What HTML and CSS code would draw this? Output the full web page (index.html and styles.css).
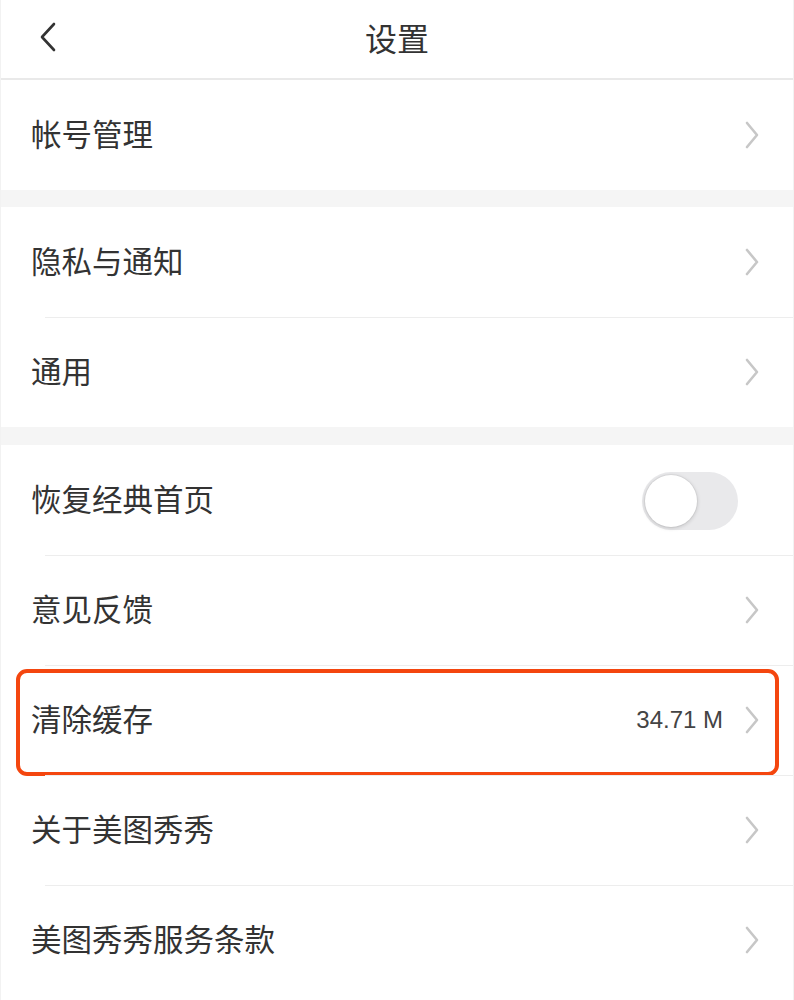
FILE: index.html
```html
<!DOCTYPE html>
<html lang="zh-CN">
<head>
<meta charset="utf-8">
<title>设置</title>
<link rel="stylesheet" href="styles.css">
</head>
<body>
<div class="page">
  <header class="topbar">
    <span class="back">
      <svg width="18" height="30" viewBox="0 0 18 30"><path d="M15 2 L3 15 L15 28" fill="none" stroke="#333" stroke-width="2.6" stroke-linecap="round" stroke-linejoin="round"/></svg>
    </span>
    <h1 class="title">设置</h1>
  </header>

  <section class="group first">
    <div class="row"><span class="label">帐号管理</span><span class="chev"><svg width="16" height="28" viewBox="0 0 16 28"><path d="M3 2 L13 14 L3 26" fill="none" stroke="#c7c7c7" stroke-width="2.6" stroke-linecap="round" stroke-linejoin="round"/></svg></span></div>
  </section>

  <div class="band"></div>

  <section class="group">
    <div class="row"><span class="label">隐私与通知</span><span class="chev"><svg width="16" height="28" viewBox="0 0 16 28"><path d="M3 2 L13 14 L3 26" fill="none" stroke="#c7c7c7" stroke-width="2.6" stroke-linecap="round" stroke-linejoin="round"/></svg></span></div>
    <div class="row"><span class="label">通用</span><span class="chev"><svg width="16" height="28" viewBox="0 0 16 28"><path d="M3 2 L13 14 L3 26" fill="none" stroke="#c7c7c7" stroke-width="2.6" stroke-linecap="round" stroke-linejoin="round"/></svg></span></div>
  </section>

  <div class="band band2"></div>

  <section class="group">
    <div class="row"><span class="label">恢复经典首页</span><span class="toggle"><span class="knob"></span></span></div>
    <div class="row"><span class="label">意见反馈</span><span class="chev"><svg width="16" height="28" viewBox="0 0 16 28"><path d="M3 2 L13 14 L3 26" fill="none" stroke="#c7c7c7" stroke-width="2.6" stroke-linecap="round" stroke-linejoin="round"/></svg></span></div>
    <div class="row highlighted"><span class="label">清除缓存</span><span class="value">34.71 M</span><span class="chev"><svg width="16" height="28" viewBox="0 0 16 28"><path d="M3 2 L13 14 L3 26" fill="none" stroke="#c7c7c7" stroke-width="2.6" stroke-linecap="round" stroke-linejoin="round"/></svg></span><span class="mark"></span></div>
    <div class="row"><span class="label">关于美图秀秀</span><span class="chev"><svg width="16" height="28" viewBox="0 0 16 28"><path d="M3 2 L13 14 L3 26" fill="none" stroke="#c7c7c7" stroke-width="2.6" stroke-linecap="round" stroke-linejoin="round"/></svg></span></div>
    <div class="row"><span class="label">美图秀秀服务条款</span><span class="chev"><svg width="16" height="28" viewBox="0 0 16 28"><path d="M3 2 L13 14 L3 26" fill="none" stroke="#c7c7c7" stroke-width="2.6" stroke-linecap="round" stroke-linejoin="round"/></svg></span></div>
  </section>
</div>
</body>
</html>
```

FILE: styles.css
```css
html, body {
  margin: 0;
  padding: 0;
  background: #ffffff;
}

body {
  font-family: "Noto Sans CJK SC", "Noto Sans", sans-serif;
  color: #333333;
}

.page {
  width: 794px;
  min-height: 1000px;
  background: #ffffff;
  border-left: 1px solid #f2f2f2;
  border-right: 1px solid #f2f2f2;
  box-sizing: border-box;
}

.topbar {
  border-bottom: 2px solid #e9e9e9;
  display: grid;
  grid-template-columns: 1fr auto 1fr;
  align-items: center;
  padding: 0 0 5px 38px;
  box-sizing: content-box;
  height: 73px;
}

.back {
  display: flex;
  align-items: center;
  grid-column: 1;
  grid-row: 1;
}

.title {
  grid-column: 2;
  grid-row: 1;
  margin: 0 0 0 -38px;
  font-size: 32px;
  font-weight: 400;
  color: #333;
  line-height: 1;
}

.band {
  height: 17px;
  background: #f5f5f5;
}

.band.band2 {
  height: 18px;
}

.row {
  position: relative;
  height: 110px;
  display: flex;
  align-items: center;
  padding: 0 33px 0 30px;
  box-sizing: border-box;
}

.row + .row {
  background-image: linear-gradient(#ededed, #ededed);
  background-size: calc(100% - 44px) 1px;
  background-position: right top;
  background-repeat: no-repeat;
}

.label {
  flex: 1;
  font-size: 30.5px;
  line-height: 1;
  color: #333;
  margin-top: -3px;
}

.value {
  font-family: "Liberation Sans", "Noto Sans", sans-serif;
  font-size: 24px;
  color: #444;
  margin-right: 21px;
}

.chev {
  display: flex;
  align-items: center;
  width: 16px;
}

.toggle {
  width: 96px;
  height: 58px;
  border-radius: 29px;
  background: #e9e9eb;
  display: flex;
  align-items: center;
  padding: 0 3px;
  box-sizing: border-box;
  margin-right: 22px;
  margin-top: 1px;
}

.knob {
  width: 52px;
  height: 52px;
  border-radius: 50%;
  background: #ffffff;
  box-shadow: 0 1px 4px rgba(0, 0, 0, 0.18), 0 0 0 1px rgba(0, 0, 0, 0.04);
}

.mark {
  position: absolute;
  left: 15px;
  right: 14px;
  top: 4px;
  bottom: -1px;
  border: 4.5px solid #f4460f;
  border-radius: 11px;
  pointer-events: none;
}
```
